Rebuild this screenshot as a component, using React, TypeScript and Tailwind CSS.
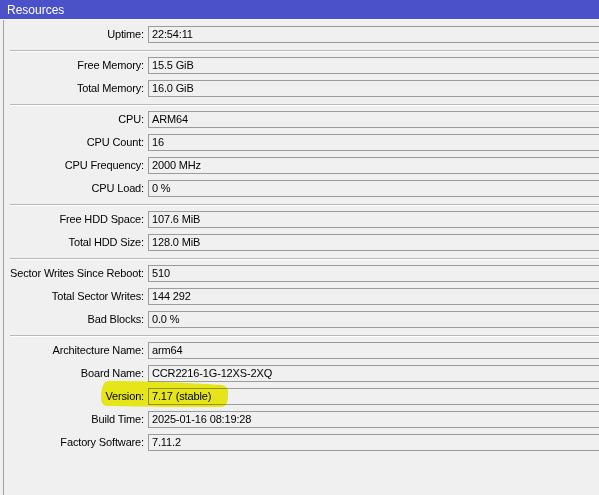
type Row = { label: string; value: string };

const groups: Row[][] = [
  [{ label: 'Uptime', value: '22:54:11' }],
  [
    { label: 'Free Memory', value: '15.5 GiB' },
    { label: 'Total Memory', value: '16.0 GiB' },
  ],
  [
    { label: 'CPU', value: 'ARM64' },
    { label: 'CPU Count', value: '16' },
    { label: 'CPU Frequency', value: '2000 MHz' },
    { label: 'CPU Load', value: '0 %' },
  ],
  [
    { label: 'Free HDD Space', value: '107.6 MiB' },
    { label: 'Total HDD Size', value: '128.0 MiB' },
  ],
  [
    { label: 'Sector Writes Since Reboot', value: '510' },
    { label: 'Total Sector Writes', value: '144 292' },
    { label: 'Bad Blocks', value: '0.0 %' },
  ],
  [
    { label: 'Architecture Name', value: 'arm64' },
    { label: 'Board Name', value: 'CCR2216-1G-12XS-2XQ' },
    { label: 'Version', value: '7.17 (stable)' },
    { label: 'Build Time', value: '2025-01-16 08:19:28' },
    { label: 'Factory Software', value: '7.11.2' },
  ],
];

const Field = ({ label, value }: Row) => (
  <div className="flex items-center h-[17px]">
    <span className="w-[141px] shrink-0 text-right pr-[1px]">{label}:</span>
    <div className="ml-[3px] flex-1 -mr-4 h-[17px] border border-[#9b9b9b] bg-[#f0f0f0] flex items-center pl-[3px]">
      {value}
    </div>
  </div>
);

export default function App() {
  return (
    <div
      className="w-[599px] h-[495px] overflow-hidden bg-[#f0f0f0] text-[11px] tracking-[-0.15px] text-black flex flex-col"
      style={{ fontFamily: '"Liberation Sans", Arial, sans-serif' }}
    >
      <div className="h-[19px] shrink-0 bg-[#4b51c8] text-white text-[12px] tracking-normal pl-[7px] flex items-center">
        Resources
      </div>
      <div className="h-[1px] shrink-0 bg-[#f6f4fc]" />
      <div className="relative flex-1 ml-[3px] border-l border-[#a0a0a0] pt-[6px]">
        {groups.map((g, gi) => (
          <div key={gi}>
            {gi > 0 && (
              <div className="ml-[6px] mt-[7px] mb-[5px] border-t border-[#b9b9b9] border-b border-b-white" />
            )}
            <div className="flex flex-col gap-[6px]">
              {g.map((r) => (
                <Field key={r.label} {...r} />
              ))}
            </div>
          </div>
        ))}
        {/* highlighter mark over the version row */}
        <svg
          className="absolute left-[94px] top-[358px] mix-blend-multiply pointer-events-none"
          width="134"
          height="34"
          viewBox="0 0 134 34"
        >
          <path
            d="M10 3 C50 3 95 5 124 7 C129 8 131 12 130 17 C130 23 129 28 124 29 C90 29 40 29 9 28 C5 28 3 24 3 20 C3 12 5 3 10 3 Z"
            fill="#f4f41a"
          />
        </svg>
      </div>
    </div>
  );
}
